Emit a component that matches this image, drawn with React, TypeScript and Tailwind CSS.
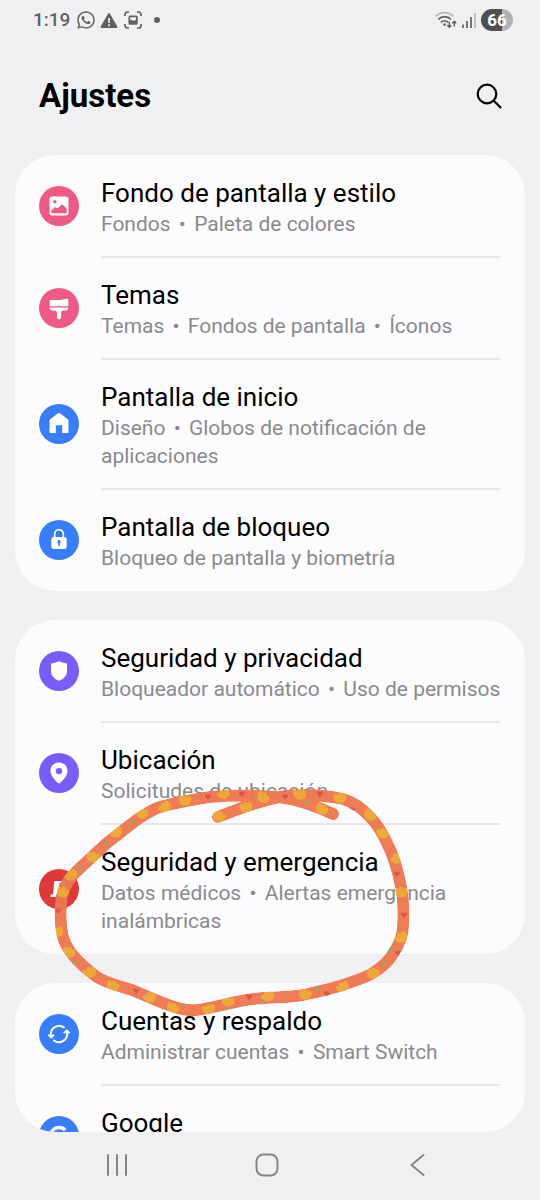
import { Fragment, type ReactNode } from "react";
import { FaWhatsapp } from "react-icons/fa";

type Item = { title: string; details: string[]; color: string; icon: ReactNode };

const pink = "bg-[#ee5a86]";
const blue = "bg-[#397dfb]";
const violet = "bg-[#795cfb]";
const red = "bg-[#dc3a38]";

const PictureIcon = () => (
  <svg viewBox="0 0 40 40" className="size-10" fill="#fff" aria-hidden="true">
    <path
      fillRule="evenodd"
      d="M13.500 10.500h13a3 3 0 0 1 3 3v13a3 3 0 0 1-3 3h-13a3 3 0 0 1-3-3v-13a3 3 0 0 1 3-3ZM15.800 14a1.700 1.700 0 1 0 0 3.400a1.700 1.700 0 0 0 0-3.400ZM12.300 27.200h15.400v-4.700l-3.800-3.600c-.6-.6-1.200-.5-1.800.1l-2.800 2.900c-.5.5-1 .6-1.600.2l-.8-.5c-.6-.4-1.100-.3-1.500.1l-3.100 2.800Z"
    />
  </svg>
);

const BrushIcon = () => (
  <svg viewBox="0 0 40 40" className="size-10" fill="#fff" aria-hidden="true">
    <path d="M10.700 12.900c0-.6.4-1 1-1h8.500c2.800 0 5-1 8-1.200.7 0 1.100.3 1.100.9v6.700H10.700ZM10.700 19.600h18.600v.4c0 1.500-1.100 2.400-2.700 2.400h-2.200c-1.400 0-2.300.9-2.300 2.200v4.900c0 1-.9 1.800-2.100 1.800s-2.100-.8-2.100-1.800v-4.900c0-1.300-.9-2.200-2.300-2.200h-2.200c-1.600 0-2.700-.9-2.700-2.400Z" />
  </svg>
);

const HomeIcon = () => (
  <svg viewBox="0 0 40 40" className="size-10" fill="#fff" aria-hidden="true">
    <path d="M18.700 9.400 11.400 15c-.6.500-.9 1-.9 1.800v11c0 .8.400 1.200 1.200 1.200h5.100v-7.700h6.400V29h5.100c.8 0 1.200-.4 1.200-1.200v-11c0-.8-.3-1.300-.9-1.800l-7.300-5.600c-.9-.7-1.700-.7-2.600 0Z" />
  </svg>
);

const LockIcon = () => (
  <svg viewBox="0 0 40 40" className="size-10" aria-hidden="true">
    <path d="M15.700 18v-4.100a4.300 4.300 0 0 1 8.600 0V18" fill="none" stroke="#fff" strokeWidth="1.700" />
    <path
      fill="#fff"
      fillRule="evenodd"
      d="M14.700 17h10.600c1.500 0 2.400.9 2.400 2.400v7.200c0 1.500-.9 2.400-2.400 2.400H14.700c-1.500 0-2.400-.9-2.400-2.400v-7.200c0-1.500.9-2.400 2.400-2.400ZM20 20.100a1.700 1.700 0 0 0-.8 3.200v2.400h1.600v-2.400a1.700 1.700 0 0 0-.8-3.200Z"
    />
  </svg>
);

const ShieldIcon = () => (
  <svg viewBox="0 0 40 40" className="size-10" fill="#fff" aria-hidden="true">
    <path d="M19.200 10.600c.6-.3 1-.3 1.600 0 1.800.9 3.700 1.400 6 1.600.8.100 1.200.5 1.200 1.300v6.800c0 4.300-3 7.500-7.100 9.300-.6.300-1.200.3-1.800 0-4.100-1.800-7.100-5-7.100-9.300v-6.800c0-.8.4-1.200 1.200-1.300 2.300-.2 4.200-.7 6-1.600Z" />
  </svg>
);

const PinIcon = () => (
  <svg viewBox="0 0 40 40" className="size-10" fill="#fff" aria-hidden="true">
    <path
      fillRule="evenodd"
      d="M20 9.500c-4.800 0-8.500 3.600-8.500 8.200 0 4.400 3.300 8.200 7.300 12.100.8.800 1.600.8 2.400 0 4-3.900 7.300-7.700 7.300-12.100 0-4.600-3.700-8.200-8.500-8.200Zm0 5.400a3.200 3.200 0 1 1 0 6.400a3.200 3.200 0 0 1 0-6.400Z"
    />
  </svg>
);

const SirenIcon = () => (
  <svg viewBox="0 0 40 40" className="size-10" fill="#fff" aria-hidden="true">
    <path d="M16 12h8c1 0 1.600.5 1.700 1.500L27 25.500h1.500V28h-17v-2.500H14l1.100-12c.1-1 .100-1.500.9-1.500Z" />
    <path d="M20.500 14h1.800l.9 11h-1.900Z" fill="#dc3a38" />
  </svg>
);

const SyncIcon = () => (
  <svg viewBox="0 0 40 40" className="size-10" aria-hidden="true">
    <g fill="none" stroke="#fff" strokeWidth="2" strokeLinecap="round">
      <path d="M12 21.500A8.200 8.200 0 0 1 25 13.500" />
      <path d="M28 18.500A8.200 8.200 0 0 1 15 26.500" />
    </g>
    <path
      d="m9.300 20.600 5.900.1c.6 0 .8.500.4.900l-2.800 2.700c-.4.400-.8.400-1.200 0l-2.700-2.800c-.4-.4-.2-.9.4-.9ZM30.700 19.400l-5.900-.1c-.6 0-.8-.5-.4-.9l2.800-2.700c.4-.4.8-.4 1.200 0l2.700 2.800c.4.400.2.900-.4.900Z"
      fill="#fff"
    />
  </svg>
);

const GoogleIcon = () => (
  <svg viewBox="0 0 40 40" className="size-10" fill="none" stroke="#fff" strokeWidth="3.400" aria-hidden="true">
    <path d="M26.200 14.200A8.300 8.300 0 1 0 28.300 20.300H20" />
  </svg>
);

const groups: Item[][] = [
  [
    { title: "Fondo de pantalla y estilo", details: ["Fondos", "Paleta de colores"], color: pink, icon: <PictureIcon /> },
    { title: "Temas", details: ["Temas", "Fondos de pantalla", "Íconos"], color: pink, icon: <BrushIcon /> },
    {
      title: "Pantalla de inicio",
      details: ["Diseño", "Globos de notificación de aplicaciones"],
      color: blue,
      icon: <HomeIcon />,
    },
    { title: "Pantalla de bloqueo", details: ["Bloqueo de pantalla y biometría"], color: blue, icon: <LockIcon /> },
  ],
  [
    {
      title: "Seguridad y privacidad",
      details: ["Bloqueador automático", "Uso de permisos"],
      color: violet,
      icon: <ShieldIcon />,
    },
    { title: "Ubicación", details: ["Solicitudes de ubicación"], color: violet, icon: <PinIcon /> },
    {
      title: "Seguridad y emergencia",
      details: ["Datos médicos", "Alertas emergencia inalámbricas"],
      color: red,
      icon: <SirenIcon />,
    },
  ],
  [
    { title: "Cuentas y respaldo", details: ["Administrar cuentas", "Smart Switch"], color: blue, icon: <SyncIcon /> },
    { title: "Google", details: [], color: blue, icon: <GoogleIcon /> },
  ],
];

function Row({ item, last }: { item: Item; last: boolean }) {
  return (
    <li>
      <a href="#" className="flex min-h-[102px] items-stretch pl-6 pr-[25px]">
        <span className={`size-10 shrink-0 self-center rounded-full ${item.color}`}>{item.icon}</span>
        <span className={`ml-[22px] flex-1 pt-[22px] ${last ? "pb-[19px]" : "-mb-px border-b-2 border-[#e6e6e8] pb-[18px]"}`}>
          <span className="block text-[26px] leading-[33px] text-black">{item.title}</span>
          <span className="-mr-3 block text-[21px] leading-7 text-[#8a8a8d]">
            {item.details.map((d, i) => (
              <Fragment key={d}>
                {i > 0 && <span className="mx-[3px]"> • </span>}
                {d}
              </Fragment>
            ))}
          </span>
        </span>
      </a>
    </li>
  );
}

const flowers = [
  [224, 793], [185, 800], [165, 807], [142, 813], [116, 832], [93, 857], [71, 875], [63, 892], [57, 932],
  [69, 952], [90, 972], [113, 986], [150, 997], [173, 1008], [209, 1009], [219, 816], [246, 807], [263, 797],
  [300, 794], [322, 809], [340, 798], [370, 815], [383, 833], [397, 858], [401, 892], [401, 937], [373, 973],
  [343, 987], [305, 994], [268, 996], [228, 1001],
];
const hearts = [
  [208, 797], [58, 911], [136, 991], [242, 794], [285, 797], [320, 794], [352, 810], [397, 874], [404, 915],
  [398, 953], [327, 994], [249, 997],
];
const leaves = [
  [132, 823], [106, 844], [80, 869], [74, 963], [183, 1004], [226, 1010], [307, 803], [390, 950], [384, 964],
  [317, 989], [261, 1003],
];

/* Hand-drawn marker loop laid over the emergency entry. */
function MarkerLoop() {
  const line =
    "M333 814C318 807 304 801 285 798C262 795 235 795 210 797C190 800 172 803 157 808C148 812 139 818 130 825L107 843L80 868C70 877 64 885 62 896C60 910 60 925 63 937C67 952 82 966 97 977C108 984 120 986 132 990L163 1003C174 1007 184 1011 196 1010C215 1008 234 1001 253 999C270 997 287 998 303 995C317 992 330 989 343 985C354 981 365 978 373 973C384 966 390 960 394 952C400 943 403 935 403 926C404 912 403 895 400 882C397 867 393 855 387 843C382 832 377 824 370 817C362 808 353 802 343 799C324 795 304 794 285 796C262 800 240 808 218 817";
  return (
    <svg
      viewBox="45 780 375 245"
      className="pointer-events-none absolute left-[30px] top-40 z-10 h-[245px] w-[375px]"
      fill="none"
      aria-hidden="true"
    >
      <mask id="stroke-area" maskUnits="userSpaceOnUse" x="45" y="780" width="375" height="245">
        <path d={line} stroke="#fff" strokeWidth="12" strokeLinecap="round" strokeLinejoin="round" />
      </mask>
      <g opacity="0.96" mask="url(#stroke-area)">
        <path d={line} stroke="#ee7751" strokeWidth="12" strokeLinecap="round" strokeLinejoin="round" />
        {flowers.map(([x, y], i) => (
          <path
            key={i}
            d="M-6.500-1C-7-4.500-4-5.500-2.500-3C-1.500-6 1.500-6 2.500-3C4-5.500 6.500-4 6.500 0C5.500 4 3 6 0 5.500C-4 5.500-6 3-6.500-1Z"
            transform={`translate(${x} ${y}) rotate(${((i * 47) % 90) - 45})`}
            fill="#eda634"
          />
        ))}
        {hearts.map(([x, y], i) => (
          <path
            key={i}
            d="M0 3-3-.5C-3-3-.5-3 0-1.200C.5-3 3-3 3-.5Z"
            transform={`translate(${x} ${y})`}
            fill="#dc5043"
          />
        ))}
        {leaves.map(([x, y], i) => (
          <path key={i} d="M-3 1.500-1-2.500 3-1.500 1.500 2.500Z" transform={`translate(${x} ${y})`} fill="#a79a5e" />
        ))}
      </g>
    </svg>
  );
}

function StatusBar() {
  return (
    <div className="flex h-10 items-center justify-between pl-[33px] pr-[27px] text-[#606062]">
      <div className="flex items-center">
        <span className="text-[19px] font-medium leading-6">1:19</span>
        <FaWhatsapp className="ml-[6px] size-5" aria-hidden="true" />
        <svg viewBox="0 0 18 17" className="ml-1 h-[17px] w-[18px]" aria-hidden="true">
          <path
            d="M8.200 1.400c.4-.7 1.200-.7 1.600 0l7.500 13.200c.4.700.1 1.400-.8 1.400h-15c-.9 0-1.200-.7-.8-1.400Z"
            fill="currentColor"
          />
          <path d="M9 6v5M9 12.300v2" stroke="#f0f0f2" strokeWidth="1.700" />
        </svg>
        <svg viewBox="0 0 18 18" className="ml-[6px] size-[18px]" fill="none" stroke="currentColor" strokeWidth="1.700" aria-hidden="true">
          <path d="M1 5V3.500A2.500 2.500 0 0 1 3.500 1H5M13 1h1.500A2.500 2.500 0 0 1 17 3.500V5M17 13v1.500a2.500 2.500 0 0 1-2.500 2.500H13M5 17H3.500A2.500 2.500 0 0 1 1 14.500V13" />
          <rect x="5.300" y="5.300" width="7.600" height="7.600" rx="1" />
          <path d="M5 13V9.800l2.500-1L10 10l3-2v5Z" fill="currentColor" stroke="none" />
        </svg>
        <span className="ml-3 size-[6px] rounded-full bg-[#606062]" />
      </div>
      <div className="flex items-center">
        <svg viewBox="0 0 24 18" className="h-[18px] w-6" fill="none" strokeWidth="1.700" aria-hidden="true">
          <path d="M1.500 5.500C6.500.3 14.500.3 19.500 5.500" stroke="#b8b8ba" />
          <path d="M4.300 8.300C7.800 4.600 13.200 4.600 17 8.300M7 11.300c2-2 5-2 7 0" stroke="#606062" />
          <circle cx="10.500" cy="13.600" r="1.300" fill="#606062" />
          <path d="M15.300 10.500v5.500m-2-1.800 2 2 2-2M20.300 15.500V10.500m-2 1.800 2-2 2 2" stroke="#606062" strokeWidth="1.400" />
        </svg>
        <svg viewBox="0 0 15 15" className="ml-[3px] size-[15px]" strokeWidth="1.700" aria-hidden="true">
          <path d="M2 11.500V15M6 8v7M10 4v11" stroke="#606062" />
          <path d="M14 0v15" stroke="#b8b8ba" />
        </svg>
        <span className="ml-[5px] flex h-[22px] w-8 items-center justify-center rounded-full bg-linear-to-r from-[#505052] from-66% to-[#b2b2b4] to-66% text-[17px] font-bold leading-none text-white">
          66
        </span>
      </div>
    </div>
  );
}

export default function App() {
  return (
    <div className="flex h-screen flex-col bg-[#f0f0f2] font-[Roboto,'Liberation_Sans',sans-serif]">
      <StatusBar />
      <header className="flex h-[115px] items-center justify-between pb-[3px] pl-[39px] pr-[37px]">
        <h1 className="text-[33px] font-bold leading-10 text-black">Ajustes</h1>
        <button type="button" aria-label="Buscar">
          <svg viewBox="0 0 28 28" className="size-7" fill="none" stroke="#000" strokeWidth="2.200" strokeLinecap="round">
            <circle cx="12" cy="12" r="9.300" />
            <path d="m18.800 18.800 6.700 6.700" />
          </svg>
        </button>
      </header>

      <main className="mx-[15px] min-h-0 flex-1 overflow-y-auto rounded-b-[40px] [scrollbar-width:none]">
        <div className="flex flex-col gap-[29px]">
          {groups.map((items, g) => (
            <section key={g} className="relative">
              <ul className="rounded-[40px] bg-[#fcfcfe]">
                {items.map((item, i) => (
                  <Row key={item.title} item={item} last={i === items.length - 1} />
                ))}
              </ul>
              {g === 1 && <MarkerLoop />}
            </section>
          ))}
        </div>
      </main>

      <nav className="grid h-[68px] grid-cols-3 place-items-center pb-[2px] pl-[42px] pr-12">
        <button type="button" aria-label="Recientes">
          <svg viewBox="0 0 24 24" className="size-6" stroke="#858587" strokeWidth="2" strokeLinecap="round">
            <path d="M3 2v20M12 2v20M21 2v20" />
          </svg>
        </button>
        <button type="button" aria-label="Inicio">
          <svg viewBox="0 0 24 24" className="size-6" fill="none" stroke="#858587" strokeWidth="2">
            <rect x="1.500" y="1.500" width="21" height="21" rx="7" />
          </svg>
        </button>
        <button type="button" aria-label="Atrás">
          <svg viewBox="0 0 24 24" className="size-6" fill="none" stroke="#858587" strokeWidth="2" strokeLinecap="round" strokeLinejoin="round">
            <path d="M18.500 2 6.500 12l12 10" />
          </svg>
        </button>
      </nav>
    </div>
  );
}
